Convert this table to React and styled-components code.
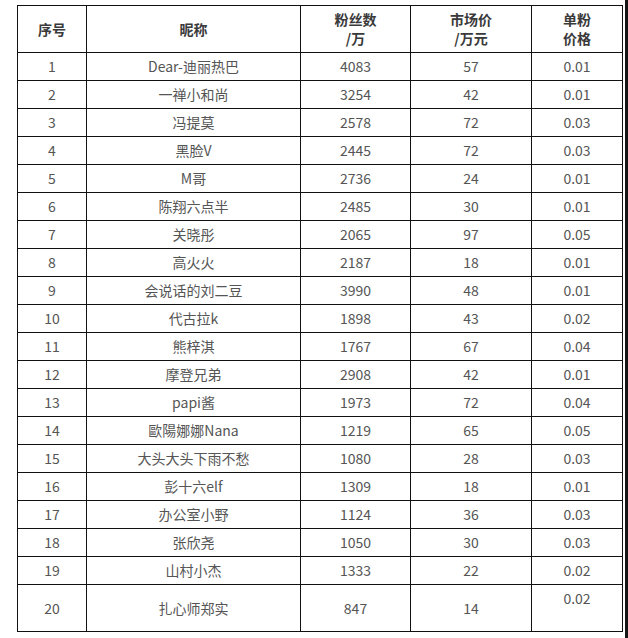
import React from "react";
import styled, { createGlobalStyle } from "styled-components";

const Global = createGlobalStyle`
  html, body { margin: 0; padding: 0; background: #fff; }
  body { font-family: "Noto Sans CJK SC", "Noto Sans", sans-serif; }
`;

const Page = styled.div`
  width: 628px;
  height: 638px;
  box-sizing: border-box;
  padding: 5px 0 0 17px;
  border-right: 3px solid #161616;
  overflow: hidden;
`;

const Table = styled.table`
  border-collapse: collapse;
  table-layout: fixed;
  width: 605px;
  font-size: 14px;
  color: #555;
`;

const HeadCell = styled.th`
  border: 1px solid #111;
  height: 46px;
  padding: 0;
  font-weight: bold;
  color: #3a3a3a;
  line-height: 19px;
  text-align: center;
  vertical-align: middle;
`;

const Cell = styled.td`
  border: 1px solid #111;
  height: ${(p) => (p.$tall ? (p.$top ? 42 : 46) : 27)}px;
  padding: ${(p) => (p.$top ? "4px 0 0" : "0")};
  line-height: 19px;
  text-align: center;
  vertical-align: ${(p) => (p.$top ? "top" : "middle")};
  font-weight: normal;
`;

const rows = [
  [1, "Dear-迪丽热巴", 4083, 57, "0.01"],
  [2, "一禅小和尚", 3254, 42, "0.01"],
  [3, "冯提莫", 2578, 72, "0.03"],
  [4, "黑脸V", 2445, 72, "0.03"],
  [5, "M哥", 2736, 24, "0.01"],
  [6, "陈翔六点半", 2485, 30, "0.01"],
  [7, "关晓彤", 2065, 97, "0.05"],
  [8, "高火火", 2187, 18, "0.01"],
  [9, "会说话的刘二豆", 3990, 48, "0.01"],
  [10, "代古拉k", 1898, 43, "0.02"],
  [11, "熊梓淇", 1767, 67, "0.04"],
  [12, "摩登兄弟", 2908, 42, "0.01"],
  [13, "papi酱", 1973, 72, "0.04"],
  [14, "歐陽娜娜Nana", 1219, 65, "0.05"],
  [15, "大头大头下雨不愁", 1080, 28, "0.03"],
  [16, "彭十六elf", 1309, 18, "0.01"],
  [17, "办公室小野", 1124, 36, "0.03"],
  [18, "张欣尧", 1050, 30, "0.03"],
  [19, "山村小杰", 1333, 22, "0.02"],
  [20, "扎心师郑实", 847, 14, "0.02"],
];

export default function App() {
  return (
    <Page>
      <Global />
      <Table>
        <colgroup>
          <col style={{ width: 69 }} />
          <col style={{ width: 214 }} />
          <col style={{ width: 110 }} />
          <col style={{ width: 121 }} />
          <col style={{ width: 91 }} />
        </colgroup>
        <thead>
          <tr>
            <HeadCell>序号</HeadCell>
            <HeadCell>昵称</HeadCell>
            <HeadCell>
              粉丝数
              <br />/万
            </HeadCell>
            <HeadCell>
              市场价
              <br />/万元
            </HeadCell>
            <HeadCell>
              单粉
              <br />
              价格
            </HeadCell>
          </tr>
        </thead>
        <tbody>
          {rows.map((r, i) => {
            const last = i === rows.length - 1;
            return (
              <tr key={r[0]}>
                <Cell $tall={last}>{r[0]}</Cell>
                <Cell $tall={last}>{r[1]}</Cell>
                <Cell $tall={last}>{r[2]}</Cell>
                <Cell $tall={last}>{r[3]}</Cell>
                <Cell $tall={last} $top={last}>
                  {r[4]}
                </Cell>
              </tr>
            );
          })}
        </tbody>
      </Table>
    </Page>
  );
}
